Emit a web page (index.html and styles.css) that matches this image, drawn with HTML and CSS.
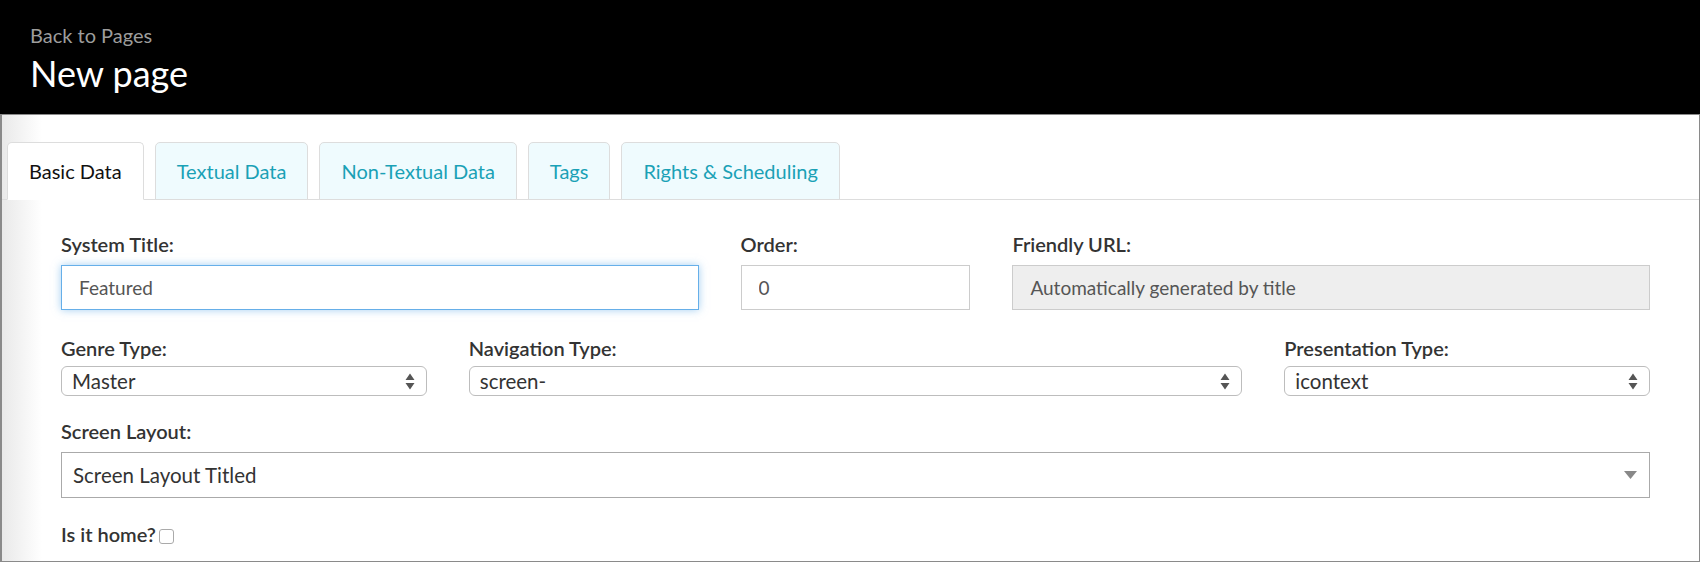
FILE: index.html
```html
<!DOCTYPE html>
<html lang="en">
<head>
    <meta charset="UTF-8">
    <title>New page</title>
    <link rel="stylesheet" href="styles.css">
</head>
<body>
    <div class="header">
        <a class="back-link" href="#">Back to Pages</a>
        <h1 class="page-title">New page</h1>
    </div>

    <div class="panel">
        <ul class="tabs">
            <li class="tab active">Basic Data</li>
            <li class="tab">Textual Data</li>
            <li class="tab">Non-Textual Data</li>
            <li class="tab">Tags</li>
            <li class="tab">Rights &amp; Scheduling</li>
        </ul>

        <form class="page-form">
            <div class="row row-first">
                <div class="field span-5">
                    <label>System Title:</label>
                    <input class="text-input focused" type="text" value="Featured">
                </div>
                <div class="field span-2">
                    <label>Order:</label>
                    <input class="text-input" type="text" value="0">
                </div>
                <div class="field span-5">
                    <label>Friendly URL:</label>
                    <input class="text-input disabled" type="text" placeholder="Automatically generated by title" disabled>
                </div>
            </div>

            <div class="row row-second">
                <div class="field span-3">
                    <label>Genre Type:</label>
                    <div class="native-select">
                        <span>Master</span>
                        <svg class="updown" width="10" height="17" viewBox="0 0 10 17"><path d="M0.5 7 L5 0.5 L9.5 7 Z M0.5 10 L5 16.5 L9.5 10 Z" fill="#555"/></svg>
                    </div>
                </div>
                <div class="field span-6">
                    <label>Navigation Type:</label>
                    <div class="native-select">
                        <span>screen-</span>
                        <svg class="updown" width="10" height="17" viewBox="0 0 10 17"><path d="M0.5 7 L5 0.5 L9.5 7 Z M0.5 10 L5 16.5 L9.5 10 Z" fill="#555"/></svg>
                    </div>
                </div>
                <div class="field span-3">
                    <label>Presentation Type:</label>
                    <div class="native-select">
                        <span>icontext</span>
                        <svg class="updown" width="10" height="17" viewBox="0 0 10 17"><path d="M0.5 7 L5 0.5 L9.5 7 Z M0.5 10 L5 16.5 L9.5 10 Z" fill="#555"/></svg>
                    </div>
                </div>
            </div>

            <div class="row row-third">
                <div class="field span-12">
                    <label>Screen Layout:</label>
                    <div class="chosen-select">
                        <span>Screen Layout Titled</span>
                        <svg class="caret" width="13" height="8" viewBox="0 0 13 8"><path d="M0 0 L13 0 L6.5 8 Z" fill="#888"/></svg>
                    </div>
                </div>
            </div>

            <div class="home-check">
                <label>Is it home?</label><span class="checkbox"></span>
            </div>
        </form>
    </div>
</body>
</html>
```

FILE: styles.css
```css
* {
    box-sizing: border-box;
    margin: 0;
    padding: 0;
}

body {
    margin: 0;
    width: 1700px;
    height: 562px;
    overflow: hidden;
    font-family: 'Lato', 'Open Sans', sans-serif;
    color: #333;
    background: #fff;
}

/* Header */
.header {
    background: #000;
    height: 114px;
    padding: 22px 0 0 30px;
}

.back-link {
    display: block;
    color: #9d9d9d;
    font-size: 20px;
    line-height: 26px;
    text-decoration: none;
}

.page-title {
    color: #fff;
    font-size: 36px;
    font-weight: 400;
    line-height: 44px;
    margin-top: 3px;
}

/* Panel */
.panel {
    height: 448px;
    border: 1px solid #8a8a8a;
    border-left-width: 2px;
    background: linear-gradient(to right, #e9e9e9, #fff 40px);
}

.tabs {
    list-style: none;
    display: flex;
    gap: 11px;
    margin-top: 27px;
    padding-left: 5px;
    border-bottom: 1px solid #ddd;
}

.tab {
    height: 58px;
    margin-bottom: -1px;
    padding: 0 21px;
    display: flex;
    align-items: center;
    font-size: 20px;
    color: #1aa1b6;
    background: #effbfe;
    border: 1px solid #ddd;
    border-radius: 5px 5px 0 0;
}

.tab.active {
    color: #111;
    background: #fff;
    border-bottom-color: #fff;
}

/* Form */
.page-form {
    padding: 32px 0 0 59px;
    width: 1648px;
}

.row {
    display: grid;
    grid-template-columns: repeat(12, 1fr);
    column-gap: 42px;
}

.span-2 { grid-column: span 2; }
.span-3 { grid-column: span 3; }
.span-5 { grid-column: span 5; }
.span-6 { grid-column: span 6; }
.span-12 { grid-column: span 12; }

label {
    display: block;
    font-size: 20px;
    font-weight: 600;
    line-height: 24px;
    color: #333;
}

.row-first label { margin-bottom: 9px; }
.row-first { margin-bottom: 26px; }

.text-input {
    width: 100%;
    height: 45px;
    padding: 0 17px;
    font-family: 'Lato', 'Open Sans', sans-serif;
    font-size: 19px;
    color: #555;
    border: 1px solid #ccc;
    background: #fff;
}

.text-input.focused {
    border-color: #66afe9;
    outline: none;
    box-shadow: 0 0 8px rgba(102, 175, 233, 0.6);
}

.text-input.disabled {
    background: #eee;
}

.text-input.disabled::placeholder {
    color: #555;
}

.row-second label { margin-bottom: 6px; }
.row-second { margin-bottom: 23px; }

.native-select {
    height: 30px;
    display: flex;
    align-items: center;
    justify-content: space-between;
    padding: 0 11px 0 10px;
    font-size: 20.5px;
    color: #333;
    border: 1px solid #bdbdbd;
    border-radius: 6px;
    background: #fff;
}

.row-third label { margin-bottom: 9px; }
.row-third { margin-bottom: 24px; }

.chosen-select {
    height: 46px;
    display: flex;
    align-items: center;
    justify-content: space-between;
    padding: 0 12px 0 11px;
    font-size: 20.5px;
    color: #333;
    border: 1px solid #aaa;
    background: #fff;
}

.home-check {
    display: flex;
    align-items: center;
}

.home-check label {
    display: inline-block;
}

.checkbox {
    width: 15px;
    height: 15px;
    margin: 4px 0 0 3px;
    border: 1px solid #aaa;
    border-radius: 3px;
    background: #fff;
}
```
